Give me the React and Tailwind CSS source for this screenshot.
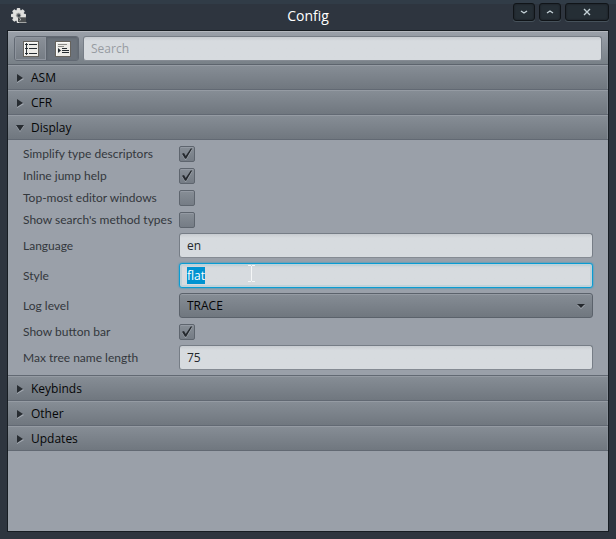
import { useEffect, useRef, useState } from "react";

const fieldClass =
  "block h-[25px] w-full rounded-[3px] border border-[#767d86] border-b-[#858b93] bg-[#d7dbdf] bg-linear-to-b from-[#c8ccd1] to-[#d7dbdf] to-[4px] px-[7px] text-[12px] leading-[17px] text-[#24282d] outline-none placeholder:text-[#979ca2] selection:bg-[#0093d1] selection:text-white";

function GearIcon() {
  return (
    <svg width="17" height="17" viewBox="0 0 17 17" aria-hidden="true">
      <g fill="#e0e0de">
        <circle cx="7.500" cy="7.500" r="5.800" />
        {[0, 45, 90, 135, 180, 225, 270, 315].map((a) => (
          <rect key={a} x="5.700" y="0" width="3.600" height="4" rx="1" transform={`rotate(${a} 7.5 7.5)`} />
        ))}
      </g>
      <circle cx="7.500" cy="7.300" r="2.300" fill="#6b6f71" stroke="#b4b4b2" strokeWidth="0.8" />
      <circle cx="8" cy="7.600" r="1.200" fill="#343c44" />
      <rect x="7" y="9" width="8" height="5" fill="#4a4d4f" />
      <path d="M7 9.500h8" stroke="#77797a" />
      <path d="M8.500 10.500l1.500 1-1.500 1" stroke="#c8caca" strokeWidth="0.8" fill="none" />
      <path d="M8 14.500h7.500" stroke="#a3a5a5" />
    </svg>
  );
}

function ListIcon() {
  return (
    <svg width="16" height="16" viewBox="0 0 16 16" aria-hidden="true">
      <rect x="0.5" y="0.5" width="15" height="15" fill="#ecebe7" stroke="#66635d" />
      <path d="M1.5 14.5v-13h13" stroke="#fbfbfa" fill="none" />
      <path d="M3.5 2v12" stroke="#30373c" />
      <path d="M2 3.5h3M2 7.5h3M2 12.5h3M6 3.5h8M6 7.5h8M6 12.5h8" stroke="#252c31" />
    </svg>
  );
}

function TreeIcon() {
  return (
    <svg width="16" height="16" viewBox="0 0 16 16" aria-hidden="true">
      <rect x="0.5" y="0.5" width="15" height="15" fill="#ecebe7" stroke="#66635d" />
      <path d="M1.5 14.5v-13h13" stroke="#fbfbfa" fill="none" />
      <path d="M3 3.5h9M3 5.5h6" stroke="#8b8b88" />
      <path d="M3 7l3 2.5-3 2.5z" fill="#252c31" />
      <path d="M7 7.5h5M7 9.5h7M7 11.5h7" stroke="#252c31" />
    </svg>
  );
}

function Arrow({ open }) {
  return (
    <svg width="8" height="10" viewBox="0 0 8 10" aria-hidden="true" className="shrink-0">
      {open ? (
        <>
          <path d="M0 3h8L4 9z" fill="#a5abb3" />
          <path d="M0 2h8L4 8z" fill="#272c31" />
        </>
      ) : (
        <>
          <path d="M1 2l7 4-7 4z" fill="#a5abb3" />
          <path d="M1 1l6 4-6 4z" fill="#272c31" />
        </>
      )}
    </svg>
  );
}

function Section({ title, defaultOpen = false, children }) {
  const [open, setOpen] = useState(defaultOpen);
  return (
    <section>
      <button
        type="button"
        aria-expanded={open}
        onClick={() => setOpen(!open)}
        className="flex h-[25px] w-full items-center gap-[7px] border-t border-b border-t-[#959ba3] border-b-[#626973] bg-linear-to-b from-[#868d95] to-[#70777f] px-2 text-left text-[12px] text-[#050607] shadow-[inset_-1px_0_0_#868d96]"
      >
        <Arrow open={open} />
        {title}
      </button>
      {open && children}
    </section>
  );
}

function Label({ id, children }) {
  return (
    <label
      htmlFor={id}
      className="self-center font-['Lato','Open_Sans',sans-serif] text-[12px] leading-[17px] whitespace-nowrap text-[#33373c]"
    >
      {children}
    </label>
  );
}

function CheckRow({ id, label, checked }) {
  return (
    <>
      <Label id={id}>{label}</Label>
      <span className="grid h-[17px] w-4 items-end">
        <input
          id={id}
          type="checkbox"
          defaultChecked={checked}
          className="peer col-start-1 row-start-1 size-4 appearance-none rounded-[2px] border border-[#5e656e] bg-linear-to-b from-[#878e96] to-[#757c85] shadow-[inset_0_1px_0_#949aa3]"
        />
        <svg
          width="16"
          height="16"
          viewBox="0 0 16 16"
          aria-hidden="true"
          className="pointer-events-none invisible col-start-1 row-start-1 peer-checked:visible"
        >
          <path d="M3 8.7l2-.7 1.700 2.900L12 3.400h1.400L7.200 13.800H6.100z" fill="#a3a9b1" />
          <path d="M3 7.700l2-.7 1.700 2.900L11.800 2.500h1.400L7.200 12.800H6z" fill="#25292e" />
        </svg>
      </span>
    </>
  );
}

function TitleButton({ label, wide, path }) {
  return (
    <button
      type="button"
      aria-label={label}
      className={`${wide ? "w-11" : "w-[22px]"} grid h-[18px] place-items-center rounded-[3px] border border-[#101418] bg-[#252e35] shadow-[0_1px_0_#46515a,inset_0_0_2px_#151a1e]`}
    >
      <svg width="8" height="8" viewBox="0 0 8 8" fill="none" stroke="#c3d0d6" strokeWidth="1.4" aria-hidden="true">
        <path d={path} />
      </svg>
    </button>
  );
}

export default function App() {
  const styleField = useRef(null);
  useEffect(() => {
    styleField.current.focus();
    styleField.current.select();
  }, []);

  return (
    <div className="flex min-h-screen flex-col border-t-4 border-[#313c47] bg-[#2e353f] px-[7px] pb-[7px] font-['Open_Sans','Noto_Sans',sans-serif]">
      <header className="grid h-[26px] grid-cols-[1fr_auto_1fr] items-start">
        <div className="pt-1 pl-1">
          <GearIcon />
        </div>
        <h1 className="text-[14px] leading-[24px] text-white">Config</h1>
        <div className="-mt-px flex justify-end gap-1">
          <TitleButton label="Minimize" path="M1 3l3 2 3-2" />
          <TitleButton label="Maximize" path="M1 5l3-2 3 2" />
          <TitleButton label="Close" wide path="M1 1l6 6M7 1l-6 6" />
        </div>
      </header>

      <main className="flex flex-1 flex-col border border-[#171d23] bg-[#9aa0a9]">
        <div className="flex h-[34px] gap-1 border-t border-b border-t-[#b4b8be] border-b-[#5d646d] bg-linear-to-b from-[#9aa0a9] to-[#788087] px-[6px] pt-1">
          <div className="flex h-[25px] overflow-hidden rounded-[3px] border border-[#626973]">
            <button
              type="button"
              aria-label="List view"
              aria-pressed="false"
              className="grid w-8 place-items-center border-r border-[#5e656e] bg-linear-to-b from-[#8b9199] to-[#757c84] shadow-[inset_0_0_0_1px_#8f959e]"
            >
              <ListIcon />
            </button>
            <button
              type="button"
              aria-label="Tree view"
              aria-pressed="true"
              className="grid w-[31px] place-items-center bg-[#6b727b] shadow-[inset_0_1px_2px_#5a616a]"
            >
              <TreeIcon />
            </button>
          </div>
          <div className="flex-1">
            <input type="search" aria-label="Search" placeholder="Search" className={fieldClass} />
          </div>
        </div>

        <Section title="ASM" />
        <Section title="CFR" />
        <Section title="Display" defaultOpen>
          <div className="grid grid-cols-[156px_1fr] gap-y-[5px] border-b border-[#626973] px-[15px] py-[5px]">
            <CheckRow id="simplify" label="Simplify type descriptors" checked />
            <CheckRow id="jump-help" label="Inline jump help" checked />
            <CheckRow id="top-most" label="Top-most editor windows" />
            <CheckRow id="method-types" label="Show search's method types" />
            <Label id="language">Language</Label>
            <input id="language" type="text" defaultValue="en" className={fieldClass} />
            <Label id="style">Style</Label>
            <div className="relative">
              <input
                id="style"
                ref={styleField}
                type="text"
                defaultValue="flat"
                className={`${fieldClass} focus:border-[#0a9bd2] focus:shadow-[0_0_2px_#0a9bd2,inset_0_0_0_2px_#bfd2d9]`}
              />
              <svg
                width="7"
                height="17"
                viewBox="0 0 7 17"
                aria-hidden="true"
                className="pointer-events-none absolute top-[2px] left-[69px]"
              >
                <path d="M0 .5h3M4 .5h3M3.500 1v15M0 16.500h3M4 16.500h3" stroke="#f4f6f7" />
              </svg>
            </div>
            <Label id="log-level">Log level</Label>
            <div className="grid items-center">
              <select
                id="log-level"
                className="col-start-1 row-start-1 h-[25px] w-full appearance-none rounded-[3px] border border-[#5b626b] bg-linear-to-b from-[#868d95] to-[#70777f] px-[7px] text-[12px] leading-[17px] text-[#050607] shadow-[inset_0_1px_0_#959ba3]"
              >
                <option>TRACE</option>
              </select>
              <svg
                width="8"
                height="6"
                viewBox="0 0 8 6"
                aria-hidden="true"
                className="pointer-events-none col-start-1 row-start-1 mr-2 justify-self-end"
              >
                <path d="M0 2h8L4 6z" fill="#a5abb3" />
                <path d="M0 1h8L4 5z" fill="#24282d" />
              </svg>
            </div>
            <CheckRow id="button-bar" label="Show button bar" checked />
            <Label id="max-length">Max tree name length</Label>
            <input id="max-length" type="text" defaultValue="75" className={fieldClass} />
          </div>
        </Section>
        <Section title="Keybinds" />
        <Section title="Other" />
        <Section title="Updates" />
      </main>
    </div>
  );
}
